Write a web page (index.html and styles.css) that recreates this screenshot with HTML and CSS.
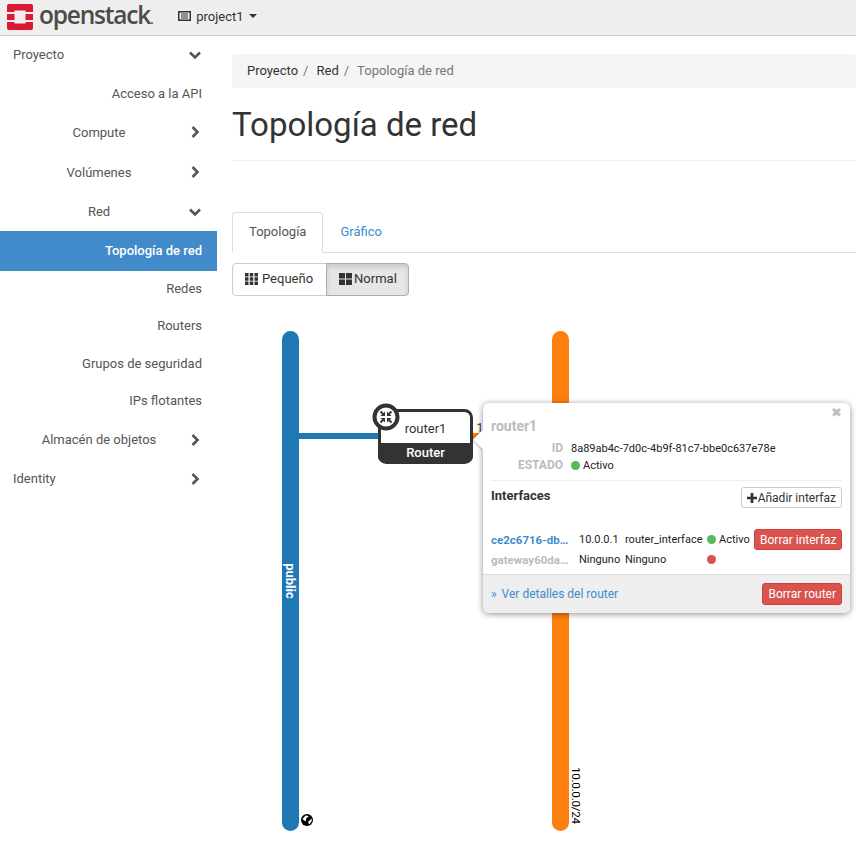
FILE: index.html
```html
<!DOCTYPE html>
<html lang="es">
<head>
  <meta charset="UTF-8" />
  <meta name="viewport" content="width=device-width, initial-scale=1" />
  <title>Topología de red - OpenStack</title>
  <link rel="stylesheet" href="styles.css">
</head>
<body>

<header class="navbar">
  <svg class="logo" viewBox="0 0 26 26" width="26" height="26">
    <path fill="#da1a32" d="M2 0h22a2 2 0 0 1 2 2v6h-7.500v-1.500h-11v1.500h-7.500v-6a2 2 0 0 1 2-2z"/>
    <path fill="#da1a32" d="M0 10h7.500v6h-7.500z M18.500 10h7.500v6h-7.500z"/>
    <path fill="#da1a32" d="M0 18h7.500v1.500h11v-1.500h7.500v6a2 2 0 0 1-2 2h-22a2 2 0 0 1-2-2z"/>
  </svg>
  <span class="logo-text">openstack<small>.</small></span>
  <div class="project-menu">
    <svg class="project-icon" viewBox="0 0 13 10" width="13" height="10">
      <path fill="none" stroke="#333" stroke-width="1.500" d="M.75.75h11.500v8.500h-11.500z"/>
      <path stroke="#333" d="M3 3h7M3 5h7M3 7h7"/>
    </svg>
    <span>project1</span>
    <i class="caret"></i>
  </div>
</header>

<div class="layout">
  <nav class="sidebar">
    <div class="nav-row top">
      <span class="nav-label left">Proyecto</span>
      <svg class="chev" viewBox="0 0 12 12" width="12" height="12"><path d="M1 3.500l5 5 5-5"/></svg>
    </div>
    <a class="nav-item first">Acceso a la API</a>
    <div class="nav-row tall">
      <span class="nav-label">Compute</span>
      <svg class="chev" viewBox="0 0 12 12" width="12" height="12"><path d="M3.500 1l5 5-5 5"/></svg>
    </div>
    <div class="nav-row tall">
      <span class="nav-label">Volúmenes</span>
      <svg class="chev" viewBox="0 0 12 12" width="12" height="12"><path d="M3.500 1l5 5-5 5"/></svg>
    </div>
    <div class="nav-row short">
      <span class="nav-label">Red</span>
      <svg class="chev" viewBox="0 0 12 12" width="12" height="12"><path d="M1 3.500l5 5 5-5"/></svg>
    </div>
    <a class="nav-item active">Topología de red</a>
    <a class="nav-item">Redes</a>
    <a class="nav-item wide">Routers</a>
    <a class="nav-item">Grupos de seguridad</a>
    <a class="nav-item last">IPs flotantes</a>
    <div class="nav-row short">
      <span class="nav-label">Almacén de objetos</span>
      <svg class="chev" viewBox="0 0 12 12" width="12" height="12"><path d="M3.500 1l5 5-5 5"/></svg>
    </div>
    <div class="nav-row">
      <span class="nav-label left">Identity</span>
      <svg class="chev" viewBox="0 0 12 12" width="12" height="12"><path d="M3.500 1l5 5-5 5"/></svg>
    </div>
  </nav>

  <main class="content">
    <ol class="breadcrumb">
      <li>Proyecto</li>
      <li class="sep">/</li>
      <li>Red</li>
      <li class="sep">/</li>
      <li class="current">Topología de red</li>
    </ol>

    <h1 class="page-title">Topología de red</h1>

    <ul class="tabs">
      <li class="tab active">Topología</li>
      <li class="tab">Gráfico</li>
    </ul>

    <div class="btn-group">
      <button class="btn">
        <svg viewBox="0 0 13 12" width="13" height="12"><path d="M0 0h3.500v3.500h-3.500zM4.750 0h3.500v3.500h-3.500zM9.500 0h3.500v3.500h-3.500zM0 4.250h3.500v3.500h-3.500zM4.750 4.250h3.500v3.500h-3.500zM9.500 4.250h3.500v3.500h-3.500zM0 8.500h3.500v3.500h-3.500zM4.750 8.500h3.500v3.500h-3.500zM9.500 8.500h3.500v3.500h-3.500z"/></svg>
        Pequeño
      </button>
      <button class="btn on">
        <svg viewBox="0 0 13 12" width="13" height="12"><path d="M0 0h6v5.500h-6zM7 0h6v5.500h-6zM0 6.500h6v5.500h-6zM7 6.500h6v5.500h-6z"/></svg>
        Normal
      </button>
    </div>

    <!-- topology canvas, same coordinates as the page -->
    <div class="canvas">
      <svg class="topology" width="856" height="855" viewBox="0 0 856 855">
        <rect x="282" y="331" width="17" height="500" rx="8.500" fill="#1f77b4"/>
        <rect x="552" y="331" width="17" height="500" rx="8.500" fill="#ff7f0e"/>
        <rect x="299" y="433" width="82" height="6" fill="#1f77b4"/>
        <rect x="470" y="433" width="20" height="6" fill="#ff7f0e"/>

        <text class="net-name" transform="translate(286 581) rotate(90)" text-anchor="middle">public</text>
        <text class="net-cidr" transform="translate(571.500 767) rotate(90)">10.0.0.0/24</text>

        <circle cx="307" cy="820" r="6" fill="#000"/>
        <path fill="#fff" d="M302.500 819l3-3.500 3.500.5-2.500 2-1 3.500zM308 822l3.500-3.500.3 2.500-2.500 3.500z"/>

        <rect x="379.500" y="410.500" width="92" height="52" rx="7" fill="#fff" stroke="#333" stroke-width="3"/>
        <path fill="#333" d="M378 443h95v13a7 7 0 0 1-7 7h-81a7 7 0 0 1-7-7z"/>
        <text class="router-name" x="425.500" y="433" text-anchor="middle">router1</text>
        <text class="router-type" x="425.500" y="457" text-anchor="middle">Router</text>
        <text class="port" x="476.500" y="432">1</text>

        <circle cx="386" cy="417" r="11.500" fill="#fff" stroke="#333" stroke-width="4"/>
        <g stroke="#333" stroke-width="1.800">
          <path d="M380.500 411.500l2.500 2.500M391.500 411.500l-2.500 2.500M380.500 422.500l2.500-2.500M391.500 422.500l-2.500-2.500"/>
        </g>
        <path fill="#333" d="M385 416h-4.500l4.500-4.500zM387 416h4.500l-4.500-4.500zM385 418h-4.500l4.500 4.500zM387 418h4.500l-4.500 4.500z"/>
      </svg>

      <div class="popup">
        <i class="popup-arrow"></i>
        <span class="popup-close">✖</span>
        <div class="popup-body">
          <div class="popup-title">router1</div>
          <dl class="props">
            <dt>ID</dt>
            <dd>8a89ab4c-7d0c-4b9f-81c7-bbe0c637e78e</dd>
            <dt>ESTADO</dt>
            <dd><i class="dot green"></i>Activo</dd>
          </dl>
          <hr class="popup-rule">
          <div class="iface-head">
            <b>Interfaces</b>
            <button class="btn-small">
              <svg viewBox="0 0 11 11" width="10" height="10"><path d="M4 0h3v4h4v3h-4v4h-3v-4h-4v-3h4z"/></svg>
              Añadir interfaz
            </button>
          </div>
          <div class="iface-table">
            <a class="iface-name link">ce2c6716-db…</a>
            <span>10.0.0.1</span>
            <span>router_interface</span>
            <span><i class="dot green"></i>Activo</span>
            <button class="btn-small danger">Borrar interfaz</button>

            <span class="iface-name muted">gateway60da…</span>
            <span>Ninguno</span>
            <span>Ninguno</span>
            <span><i class="dot red"></i></span>
            <span></span>
          </div>
        </div>
        <div class="popup-footer">
          <a class="details"><span class="raquo">»</span> Ver detalles del router</a>
          <button class="btn-small danger big">Borrar router</button>
        </div>
      </div>
    </div>
  </main>
</div>

</body>
</html>
```

FILE: styles.css
```css
* {
  box-sizing: border-box;
}
html, body {
  height: 855px;
  overflow: hidden;
}
body {
  margin: 0;
  font-family: Roboto, "Liberation Sans", Arial, sans-serif;
  font-size: 13px;
  color: #333;
  background: #fff;
}

.navbar {
  height: 36px;
  background: #eee;
  border-bottom: 1px solid #ccc;
  display: flex;
  align-items: center;
  padding-left: 7px;
}
.logo {
  margin-top: -1px;
  flex: none;
}
.logo-text {
  font-family: "Open Sans", sans-serif;
  font-size: 24.500px;
  font-weight: 600;
  line-height: 34px;
  color: #4e4a47;
  margin-left: 6px;
  margin-right: 26px;
  letter-spacing: -1.200px;
  white-space: nowrap;
  flex: none;
}
.logo-text small {
  font-size: 12px;
}
.project-menu {
  display: flex;
  align-items: center;
  font-size: 13px;
  margin-top: -3px;
}
.project-icon {
  margin-right: 5px;
}
.caret {
  width: 0;
  height: 0;
  border-left: 4px solid transparent;
  border-right: 4px solid transparent;
  border-top: 4px solid #333;
  margin-left: 5px;
}

.layout {
  display: flex;
}
.sidebar {
  width: 217px;
  flex: none;
  color: #555;
}
.nav-row {
  height: 39.500px;
  display: flex;
  align-items: center;
  padding: 0 16px 0 13px;
}
.nav-row.top {
  height: 37px;
}
.nav-row.tall {
  height: 40px;
}
.nav-row.short {
  height: 39px;
}
.nav-label {
  flex: 1;
  text-align: center;
}
.nav-label.left {
  text-align: left;
}
.chev {
  fill: none;
  stroke: #555;
  stroke-width: 2.600;
  flex: none;
  margin-left: 4px;
}
.nav-item {
  display: block;
  height: 37.250px;
  line-height: 36.500px;
  text-align: right;
  padding-right: 15px;
}
.nav-item.wide {
  height: 37.750px;
}
.nav-item.first {
  height: 39px;
  line-height: 41px;
}
.nav-item.active {
  height: 40px;
  line-height: 40px;
  background: #428bca;
  color: #fff;
  font-weight: 500;
}
.nav-item.last {
  height: 36.750px;
}

.content {
  flex: 1;
  min-width: 0;
  padding: 18px 0 0 15px;
}
.breadcrumb {
  list-style: none;
  margin: 0;
  height: 34px;
  padding: 0 15px 2px;
  background: #f5f5f5;
  border-radius: 4px;
  display: flex;
  align-items: center;
  gap: 5px;
}
.breadcrumb .sep {
  margin-right: 3px;
}
.breadcrumb .sep,
.breadcrumb .current {
  color: #777;
}
.page-title {
  font-size: 33px;
  font-weight: 400;
  line-height: 36px;
  margin: 19px 0 0;
  padding-bottom: 17px;
  border-bottom: 1px solid #eee;
  color: #333;
}

.tabs {
  list-style: none;
  margin: 51px 0 0;
  padding: 0;
  height: 41px;
  display: flex;
  border-bottom: 1px solid #ddd;
}
.tab {
  height: 41px;
  line-height: 38px;
  padding: 0 16px;
  color: #428bca;
  border: 1px solid transparent;
}
.tab.active {
  color: #555;
  background: #fff;
  border-color: #ddd #ddd #fff;
  border-radius: 4px 4px 0 0;
}

.btn-group {
  display: flex;
  margin-top: 10px;
}
.btn {
  height: 33px;
  font: inherit;
  color: #333;
  background: #fff;
  border: 1px solid #ccc;
  padding: 0 12px 2px;
  display: flex;
  align-items: center;
  gap: 4px;
}
.btn svg {
  fill: #333;
  margin-top: 1px;
}
.btn:first-child {
  border-radius: 4px 0 0 4px;
  padding-right: 13px;
}
.btn:last-child {
  border-radius: 0 4px 4px 0;
  margin-left: -1px;
  padding-right: 11px;
  gap: 2px;
}
.btn.on {
  background: #e6e6e6;
  border-color: #adadad;
  box-shadow: inset 0 3px 5px rgba(0, 0, 0, 0.125);
}

.topology {
  position: absolute;
  left: 0;
  top: 0;
}
.net-name {
  font-size: 13px;
  font-weight: 700;
  fill: #fff;
}
.net-cidr {
  font-size: 11.700px;
  letter-spacing: -0.300px;
  fill: #000;
}
.router-name {
  font-size: 13px;
  fill: #333;
}
.router-type {
  font-size: 13px;
  font-weight: 500;
  fill: #fff;
}
.port {
  font-size: 12px;
  fill: #333;
}

.popup {
  position: absolute;
  left: 483px;
  top: 403px;
  width: 367px;
  height: 210px;
  background: #fff;
  border-radius: 6px;
  box-shadow: 0 1px 6px rgba(0, 0, 0, 0.45);
  font-size: 11px;
  display: flex;
  flex-direction: column;
}
.popup-arrow {
  position: absolute;
  left: -7.500px;
  top: 28.500px;
  width: 15px;
  height: 15px;
  background: #fff;
  transform: rotate(45deg);
  box-shadow: -1px 1px 2px rgba(0, 0, 0, 0.25);
  clip-path: polygon(-20% -20%, -20% 120%, 120% 120%);
}
.popup-close {
  position: absolute;
  right: 8px;
  top: 2px;
  color: #bbb;
  font-family: "DejaVu Sans", sans-serif;
  font-size: 13px;
}
.popup-body {
  flex: 1;
  padding: 16px 8px 0;
}
.popup-title {
  font-size: 14px;
  font-weight: 700;
  color: #bbb;
  line-height: 15px;
}
.props {
  display: grid;
  grid-template-columns: 72px 1fr;
  column-gap: 8px;
  row-gap: 4px;
  margin: 8px 0 0;
  line-height: 13px;
}
.props dt {
  font-size: 12px;
  font-weight: 700;
  color: #bbb;
  text-align: right;
}
.props dd {
  margin: 0;
  color: #222;
}
.dot {
  display: inline-block;
  width: 9px;
  height: 9px;
  border-radius: 50%;
  margin-right: 3px;
  vertical-align: -1px;
}
.dot.green {
  background: #5cb85c;
}
.dot.red {
  background: #d9534f;
}
.popup-rule {
  border: 0;
  border-top: 1px solid #eee;
  margin: 8px 0 0;
}
.iface-head {
  display: flex;
  justify-content: space-between;
  align-items: flex-start;
  margin-top: 6px;
}
.iface-head b {
  font-size: 13px;
  font-weight: 700;
  color: #333;
  line-height: 17px;
}
.btn-small {
  height: 21px;
  font: inherit;
  font-size: 12px;
  color: #333;
  background: #fff;
  border: 1px solid #ccc;
  border-radius: 3px;
  padding: 0 5px;
  display: flex;
  align-items: center;
  gap: 1px;
  white-space: nowrap;
}
.btn-small svg {
  fill: #333;
}
.btn-small.danger {
  color: #fff;
  background: #d9534f;
  border-color: #d43f3a;
}
.btn-small.big {
  height: 22px;
}
.iface-table {
  display: grid;
  grid-template-columns: 88px 46px 82px 47px 88px;
  grid-template-rows: 21px 19px;
  align-items: center;
  margin-top: 21px;
  color: #222;
}
.iface-name {
  font-size: 11.500px;
  font-weight: 700;
}
.link {
  color: #428bca;
}
.muted {
  color: #bbb;
}
.popup-footer {
  height: 39px;
  background: #eee;
  border-top: 1px solid #ddd;
  border-radius: 0 0 6px 6px;
  display: flex;
  justify-content: space-between;
  align-items: center;
  padding: 0 8px;
}
.details {
  font-size: 12px;
  color: #428bca;
}
.raquo {
  margin-right: 2px;
}
```
